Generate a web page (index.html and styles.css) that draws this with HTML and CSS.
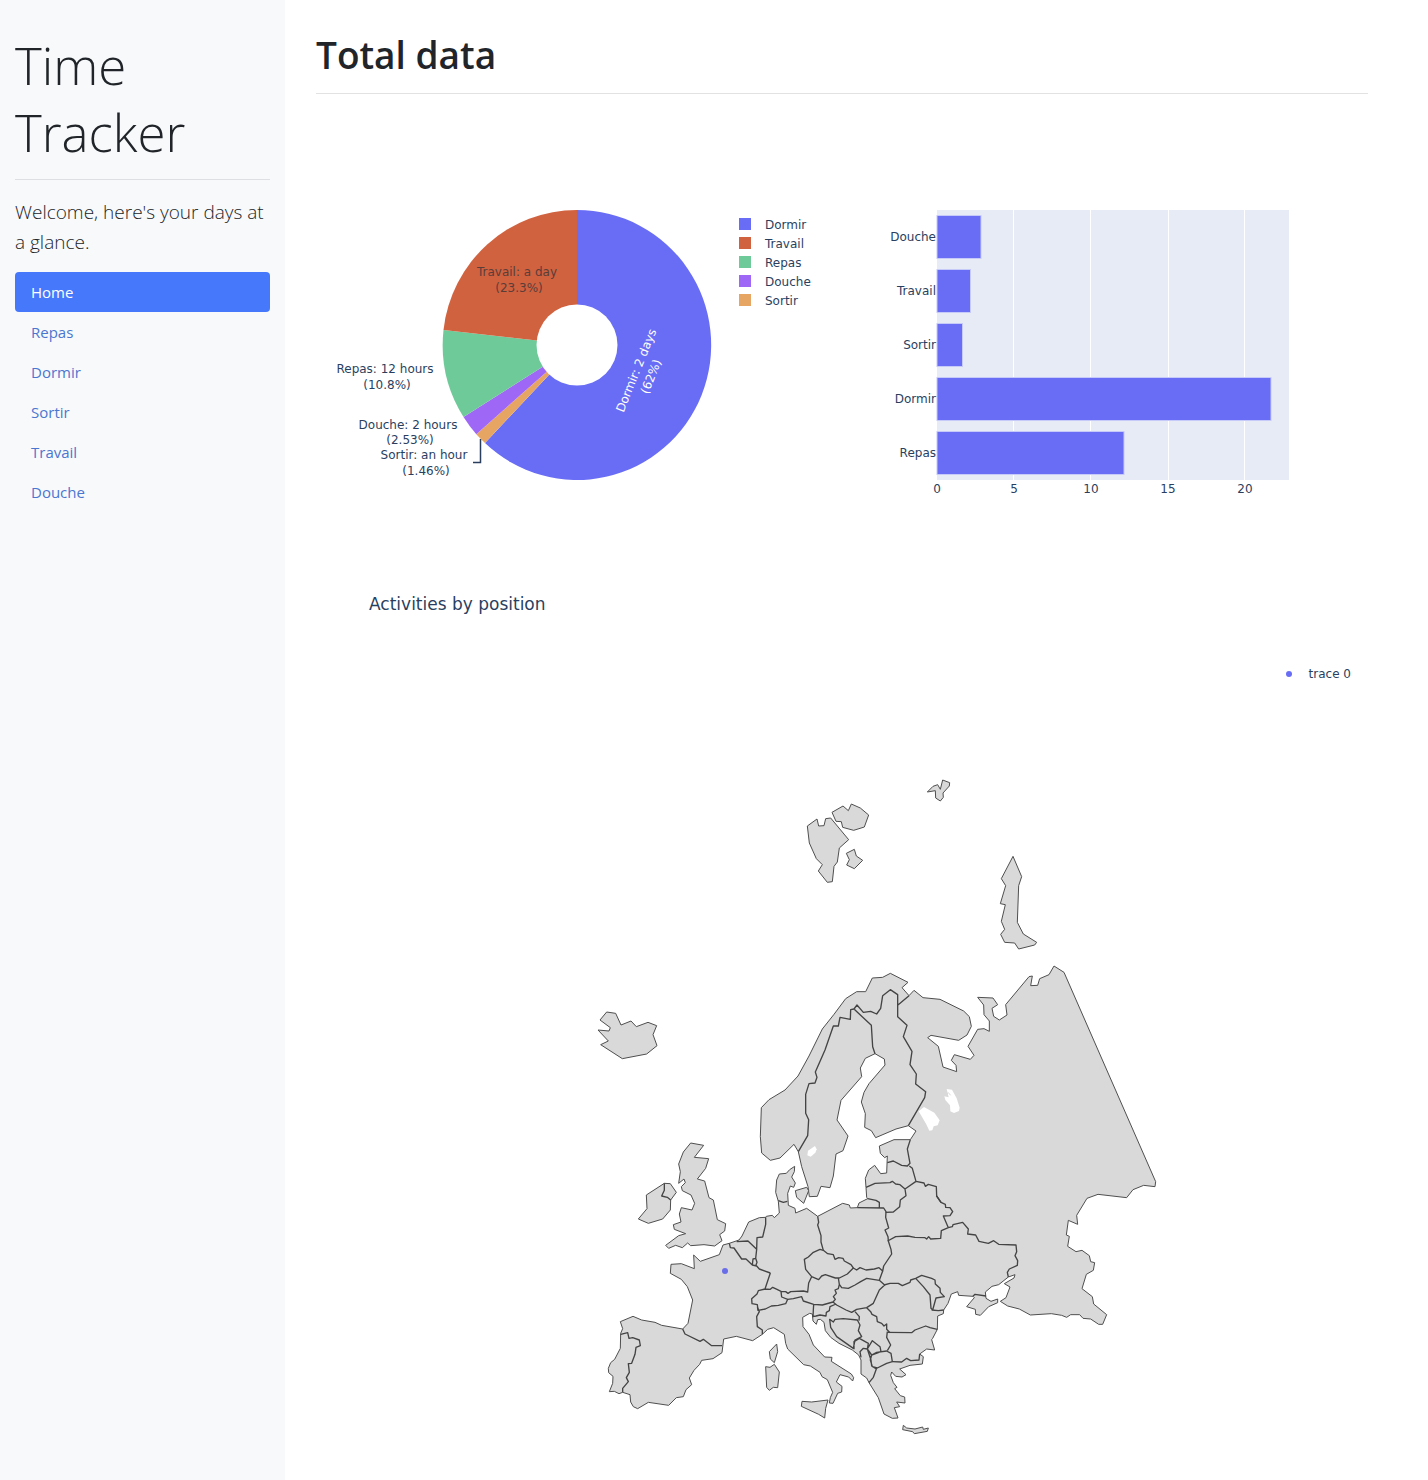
FILE: index.html
```html
<!DOCTYPE html>
<html lang="en">
<head>
<meta charset="utf-8">
<meta name="viewport" content="width=device-width, initial-scale=1">
<title>Time Tracker</title>
<link rel="stylesheet" href="styles.css">
</head>
<body>
<div class="layout">
  <aside class="sidebar">
    <h2 class="brand">Time Tracker</h2>
    <p class="lead">Welcome, here's your days at a glance.</p>
    <nav class="nav">
      <a class="nav-link active" href="#home" aria-current="page">Home</a>
      <a class="nav-link" href="#repas">Repas</a>
      <a class="nav-link" href="#dormir">Dormir</a>
      <a class="nav-link" href="#sortir">Sortir</a>
      <a class="nav-link" href="#travail">Travail</a>
      <a class="nav-link" href="#douche">Douche</a>
    </nav>
  </aside>
  <main class="content">
    <h1 class="page-title">Total data</h1>
    <div class="charts">
      <svg class="chart" viewBox="316 110 526 450" role="img" aria-label="Share of time by activity">
        <path class="dormir" d="M577 345V210A134 135 0 1 1 485 443Z"/>
        <path class="sortir" d="M577 345L485 443A134 135 0 0 1 476.300 434.200Z"/>
        <path class="douche" d="M577 345L476.300 434.200A134 135 0 0 1 463.500 417Z"/>
        <path class="repas" d="M577 345L463.500 417A134 135 0 0 1 443.500 330Z"/>
        <path class="travail" d="M577 345L443.500 330A134 135 0 0 1 577 210Z"/>
        <circle class="hole" cx="577" cy="345" r="40.500"/>
        <path class="leader" d="M473 462.500H480.500V439"/>
        <g class="label middle">
          <text class="on-slice" x="517" y="276">Travail: a day</text>
          <text class="on-slice" x="519" y="292">(23.3%)</text>
          <text x="385" y="373">Repas: 12 hours</text>
          <text x="387" y="389">(10.8%)</text>
          <text x="408" y="429">Douche: 2 hours</text>
          <text x="410" y="444">(2.53%)</text>
          <text x="424" y="459">Sortir: an hour</text>
          <text x="426" y="475">(1.46%)</text>
          <g class="inverse" transform="translate(640 372) rotate(-68)">
            <text x="0" y="0">Dormir: 2 days</text>
            <text x="0" y="16">(62%)</text>
          </g>
        </g>
        <rect class="dormir" x="739" y="218" width="12" height="12"/>
        <rect class="travail" x="739" y="237" width="12" height="12"/>
        <rect class="repas" x="739" y="256" width="12" height="12"/>
        <rect class="douche" x="739" y="275" width="12" height="12"/>
        <rect class="sortir" x="739" y="294" width="12" height="12"/>
        <g class="label">
          <text x="765" y="229">Dormir</text>
          <text x="765" y="248">Travail</text>
          <text x="765" y="267">Repas</text>
          <text x="765" y="286">Douche</text>
          <text x="765" y="305">Sortir</text>
        </g>
      </svg>
      <svg class="chart" viewBox="842 110 526 450" role="img" aria-label="Hours by activity">
        <rect class="plot" x="937" y="210" width="352" height="270"/>
        <path class="gridline" d="M1013.500 210V480M1090.500 210V480M1168.500 210V480M1244.500 210V480"/>
        <g class="bars">
          <rect x="937" y="215.500" width="44" height="43"/>
          <rect x="937" y="269.500" width="33.500" height="43"/>
          <rect x="937" y="323.500" width="25.500" height="43"/>
          <rect x="937" y="377.500" width="334" height="43"/>
          <rect x="937" y="431.500" width="187" height="43"/>
        </g>
        <g class="label end">
          <text x="936" y="241">Douche</text>
          <text x="936" y="295">Travail</text>
          <text x="936" y="349">Sortir</text>
          <text x="936" y="403">Dormir</text>
          <text x="936" y="457">Repas</text>
        </g>
        <g class="label middle">
          <text x="937" y="493">0</text>
          <text x="1014" y="493">5</text>
          <text x="1091" y="493">10</text>
          <text x="1168" y="493">15</text>
          <text x="1245" y="493">20</text>
        </g>
      </svg>
    </div>
    <section class="positions">
      <h2 class="map-title">Activities by position</h2>
      <div class="legend"><span class="dot"></span>trace 0</div>
      <svg class="map" viewBox="948 2052 3156 2388" role="img" aria-label="Map of Europe">
        <!-- continental coastline -->
        <path class="land" d="M2395 3455L2382 3433 2340 3474 2311 3481 2285 3459 2281 3410 2284 3323 2307 3299 2355 3270 2394 3228 2427 3168 2467 3087 2502 3043 2537 2996 2570 2975 2597 2975 2617 2934 2648 2932 2671 2920 2724 2947 2706 2963 2727 2987
        2742 2971 2769 2993 2820 2998 2891 3033 2908 3050 2914 3079 2901 3105 2876 3121 2793 3106 2783 3113 2815 3139 2829 3201 2870 3215 2868 3196 2854 3181 2863 3164 2911 3178 2922 3166 2904 3139 2933 3088 2952 3086 2968 3094 2968 3063 2952 3044 2951 3015 2933 2992 2979 2994 2993 3014 2976 3025 2981 3049 2998 3060 3021 3045 3017 3014 3087 2930 3097 2928 3092 2957 3113 2956 3119 2936 3147 2924 3162 2898 3192 2917
        3467 3545 3465 3560 3431 3556 3399 3569 3380 3593 3294 3583 3261 3595 3230 3646 3233 3673 3205 3661 3199 3705 3208 3709 3203 3739 3228 3755 3246 3751 3268 3767 3272 3785 3284 3788 3280 3811 3259 3823 3246 3866 3277 3890 3281 3912 3320 3944 3308 3973 3296 3973 3272 3957 3249 3955 3239 3944 3212 3944 3200 3952 3185 3946 3154 3941 3091 3945 3058 3927 3023 3918 3001 3904 3018 3893 3030 3861 3013 3851 3042 3834 3045 3824 3025 3831
        2996 3854 2976 3859 2956 3876 2958 3895 2973 3904 2993 3897 2993 3908 2966 3920 2941 3946 2927 3943 2926 3928 2900 3920 2923 3893 2919 3889 2876 3886 2873 3875 2854 3882 2844 3910 2831 3930 2830 3941 2813 3948 2812 3988 2798 4015 2795 4019 2804 4050 2780 4047 2759 4062 2770 4070 2767 4092 2730 4096 2699 4107 2718 4124 2706 4131 2687 4129 2675 4116 2672 4126 2680 4148 2691 4162 2684 4166 2701 4187 2714 4191 2715 4209 2690 4206 2699 4220 2683 4223 2694 4254 2677 4255 2652 4242 2635 4193 2607 4148 2600 4134 2583 4122 2583 4080 2576 4065
        2557 4050 2517 4030 2492 4012 2476 3992 2472 3967 2461 3958 2453 3959 2449 3973 2439 3963 2437 3942 2429 3940 2408 3952 2409 3980 2427 4003 2440 4035 2474 4071 2496 4072 2494 4084 2554 4122 2561 4133 2558 4143 2546 4131 2520 4124 2509 4146 2526 4159 2525 4176 2513 4180 2499 4210 2488 4209 2491 4193 2498 4177 2482 4139 2466 4130 2460 4117 2431 4098 2411 4094 2363 4047 2357 4030 2353 4003 2321 3983 2303 3988 2287 4003 2258 4022
        2209 4009 2171 4017 2166 4058 2139 4076 2105 4081 2099 4093 2082 4111 2068 4134 2075 4154 2058 4169 2050 4190 2029 4193 2006 4216 1945 4207 1913 4226 1900 4220 1892 4206 1890 4184 1868 4177 1857 4181 1843 4174 1828 4175 1838 4150 1839 4129 1826 4118 1825 4105 1832 4088 1844 4078 1861 4045 1862 4000 1868 3986 1861 3965 1899 3949 1925 3960 1965 3967 1985 3976 2048 3987 2064 3970 2078 3900 2062 3860 2044 3838 2011 3820 2013 3793 2044 3791 2083 3806 2081 3765 2101 3784 2158 3764 2169 3735 2188 3730
        2217 3720 2226 3708 2246 3666 2278 3653 2297 3652 2299 3649 2317 3646 2323 3653 2338 3639 2335 3604 2327 3577 2330 3540 2338 3522 2359 3520 2369 3509 2384 3499 2383 3515 2375 3531 2386 3549 2381 3562 2371 3558 2363 3580 2365 3616 2385 3625 2387 3639 2420 3625 2453 3649 2528 3610 2548 3615 2551 3624 2572 3623 2577 3609 2603 3596 2600 3592 2598 3562 2596 3535 2606 3510 2624 3496 2642 3521 2660 3519 2662 3468 2654 3473 2641 3460 2638 3438 2682 3419 2731 3419 2748 3393 2725 3377 2688 3387 2627 3413 2614 3392 2594 3382 2596 3341 2584 3306 2592 3277 2607 3251 2655 3195 2653 3177 2625 3161 2596 3175 2581 3204 2585 3230
        2523 3301 2511 3360 2544 3408 2529 3452 2508 3462 2500 3528 2490 3563 2463 3559 2452 3589 2428 3590 2424 3560 2405 3500Z"/>
        <!-- Svalbard, Franz Josef Land, Novaya Zemlya -->
        <g class="land" transform="translate(2220 2310)">
          <path d="M202 168L231 147 236 168 252 167 257 146 272 144 326 209 298 234 292 276 282 289 277 335 262 337 235 303 247 284 229 266 208 219Z"/>
          <path d="M276 127L309 108 325 122 334 102 361 114 386 135 373 171 341 181 308 172 304 155 288 154Z"/>
          <path d="M319 250L343 238 349 258 368 271 343 296 320 285 328 269Z"/>
          <path d="M562 66L579 49 593 44 601 58 608 30 629 38 628 48 609 69 610 82 601 93 587 84 586 62Z"/>
          <path d="M819 259L845 320 836 347 832 457 850 492 890 517 884 525 836 537 824 519 794 517 782 493 794 478 784 454 796 404 781 401 797 347 784 326Z"/>
        </g>
        <!-- Iceland and Zealand -->
        <g class="land" transform="translate(1740 2880)">
          <path d="M80 156L107 160 123 195 153 183 169 200 204 187 230 197 219 224 231 257 200 282 127 296 62 254 85 243 54 210 87 213 91 203 60 180Z"/>
          <path d="M646 692L680 682 686 692 671 730 650 712Z"/>
        </g>
        <!-- Great Britain and Ireland -->
        <g class="land" transform="translate(1770 3390)">
          <path d="M302 39L341 46 313 82 356 86 347 115 322 147 344 153 357 203 370 210 382 269 407 281 404 303 389 314 396 332 374 348 342 344 302 347 293 339 277 353 257 346 236 355 227 346 266 317 287 311 253 298 250 284 273 276 268 252 274 233 306 240 314 220 303 195 277 182 274 170 286 158 282 147 266 160 271 125 266 102 280 66Z"/>
          <path d="M223 160L241 161 259 187 242 210 241 240 218 267 175 280 145 267 171 236 169 195Z"/>
        </g>
        <!-- Mediterranean islands -->
        <g class="land" transform="translate(2220 3900)">
          <path d="M110 132L113 155 103 188 91 177 88 155Z"/>
          <path d="M77 200L90 202 103 193 118 216 113 263 100 262 88 271 80 262Z"/>
          <path d="M186 304L215 306 264 300 257 325 254 354 236 343 184 319Z"/>
          <path d="M490 376L500 384 525 387 548 381 550 388 565 384 562 394 523 401 518 395 488 389Z"/>
        </g>
        <!-- borders: Norway, Sweden, Denmark -->
        <g class="border" transform="translate(1740 2880)">
          <path d="M655 575L683 527 686 479 677 460 677 403 687 371 705 369 711 352 706 336 735 270 760 198 775 198 780 172 811 178 812 149 822 147M595 722L610 727 622 724"/>
        </g>
        <!-- borders: Finland, Baltic states, Belarus -->
        <g class="border" transform="translate(2550 2850)">
          <path d="M12 177L21 165 40 187 62 184 80 192 92 175 98 137 121 119 143 134 143 166 177 137M12 177L64 226 68 290 75 311M143 166L143 200 171 226 160 260 186 304 180 344 199 372 197 402 227 425 224 443 175 527"/>
          <path d="M181 569L172 597 180 640 172 648 155 646 130 633 112 638M178 648L187 655 198 694 165 717 150 704 137 702 127 694 120 698 75 700 48 712M165 717L168 737 151 750 149 770 130 786 107 787M198 694L222 699 226 709 235 703 259 710 260 738 273 757"/>
        </g>
        <!-- borders: Benelux, Northern Ireland -->
        <g class="border" transform="translate(1770 3390)">
          <path d="M223 160L223 181 215 198 232 202 242 210M418 340L421 353 432 354 455 387 468 387 487 405 500 408 508 417 541 429M440 335L474 333 500 358M487 405L489 387 497 385 501 397 497 408M527 262L527 283 518 321 501 323 500 358 497 385"/>
        </g>
        <!-- borders: Iberia -->
        <g class="border" transform="translate(1770 3720)">
          <path d="M278 267L285 282 330 304 340 298 365 317 396 317M92 283L113 278 117 295 128 293 148 300 151 317 138 322 135 343 125 370 115 371 118 397 109 413 115 425 98 445 98 457"/>
        </g>
        <!-- borders: central Europe -->
        <g class="border" transform="translate(2220 3570)">
          <path d="M91 249L75 297 55 302 51 312 35 326 36 341 52 344 54 361 76 357 94 348 115 346 137 341 143 328 125 321 123 304 111 298 98 292 91 298 75 297M123 304L137 305 144 310 152 305 190 303 203 306 206 279 215 260"/>
          <path d="M193 208L205 201 220 187 240 178 250 181 263 191 280 194 285 208 296 203 309 205 313 213 333 224 340 234 322 252 298 264 286 264 256 254 245 258 236 269 215 260 197 238Z"/>
          <path d="M233 79L236 97 233 105 243 137 243 156 250 181M340 234L350 240 360 233 378 240 403 237 417 233 428 243 431 228 455 192 453 178 445 153 444 140 435 120 446 114 437 82 438 65 431 54 352 53M383 26L408 31 418 37 418 54"/>
          <path d="M143 328L160 326 185 320 190 333 221 343 247 345 279 336 286 328 280 320 289 310 285 300 295 296 298 283 295 264M298 283L305 293 325 295 345 285 362 275 380 265 418 271 428 243M418 271L434 285 418 300 400 340 380 353 350 358 335 367 318 360 290 345 279 336M221 343L220 360 219 380 228 378 240 375 258 378 259 367 268 362 270 350 288 342M380 353L392 365 396 373 410 380 412 395 425 400 432 408 440 402 440 418 450 428"/>
        </g>
        <!-- borders: Ukraine, Moldova, Romania -->
        <g class="border" transform="translate(2640 3570)">
          <path d="M23 153L47 140 83 138 105 142 135 143 140 147 146 140 152 147 182 145 184 122 205 113 217 110 219 104 248 97 265 117 263 132 287 135 297 154 325 160 341 152 356 163 408 165 410 185 405 197 413 212 412 226 388 237 382 247 385 261M169 17L183 37 196 43 197 52 210 53 218 65 210 77 190 78 205 113"/>
          <path d="M12 285L30 280 55 280 67 287 90 277 92 270 107 265 125 256 155 265 165 270 166 282 180 295 181 307 193 320 168 324 158 360 153 355 150 315 130 290 107 265M155 360L175 362 191 360M279 319L285 313 318 318M22 427L95 428 105 420 137 408 150 413 172 418"/>
        </g>
        <!-- borders: Balkans and the Alps -->
        <g class="border" transform="translate(2220 3900)">
          <path d="M52 22L58 35 50 50 52 80 67 90 67 103M345 35L358 50 357 62M442 95L440 112 452 135 442 152M457 185L485 186 500 175 512 182 537 180 539 162"/>
          <path d="M395 165L410 157 440 153 453 160 457 185 440 190 412 204 397 200 391 180ZM382 147L397 122 420 140 423 155 395 165ZM363 172L360 155 370 145 382 147 393 180 395 198 409 207 400 232 387 248M342 148L342 125 358 115 385 130 382 147M269 58L280 66 285 58 310 56 352 60 360 75 355 92 365 110 345 120 340 145 290 110 272 82Z"/>
        </g>
        <!-- lakes -->
        <g class="lake">
          <path d="M2756 3334L2772 3321 2803 3338 2819 3361 2813 3376 2801 3379 2797 3391 2788 3392 2778 3371Z"/>
          <path d="M2840 3267L2856 3269 2870 3295 2879 3323 2877 3333 2862 3339 2851 3334 2850 3316 2836 3300 2833 3289 2846 3292Z"/>
          <path d="M2422 3466L2424 3452 2445 3438 2450 3448 2446 3458 2432 3470Z"/>
          <path class="shore" d="M2835 3287L2845 3278 2852 3286"/>
        </g>
        <circle class="position" cx="2175" cy="3813" r="9"/>
      </svg>
    </section>
  </main>
</div>
</body>
</html>
```
FILE: styles.css
```css
* { box-sizing: border-box; }

body {
  margin: 0;
  background: #fff;
  color: #212529;
  font-family: "Open Sans", "Noto Sans", sans-serif;
  font-size: 15px;
  line-height: 24px;
}

.layout {
  display: grid;
  grid-template-columns: 285px minmax(0, 1fr);
  min-height: 100vh;
}

.sidebar {
  padding: 32px 15px;
  background: #f8f9fb;
}

.brand {
  margin: 0;
  padding-bottom: 13px;
  border-bottom: 1px solid #dddfe2;
  font-size: 51px;
  font-weight: 300;
  line-height: 67px;
}

.lead {
  margin: 17px 0 15px;
  font-size: 19px;
  font-weight: 300;
  line-height: 30px;
}

.nav {
  display: flex;
  flex-direction: column;
}

.nav-link {
  padding: 8px 16px;
  border-radius: 4px;
  color: #4a76d0;
  text-decoration: none;
}

.nav-link.active {
  background: #4678fc;
  color: #fff;
}

.content { padding: 32px 60px 0 31px; }

.page-title {
  margin: 0;
  padding-bottom: 16px;
  border-bottom: 1px solid #e2e2e3;
  font-size: 37px;
  font-weight: 600;
  line-height: 45px;
}

.charts {
  display: grid;
  grid-template-columns: 1fr 1fr;
  margin-top: 16px;
}

.chart, .map {
  display: block;
  width: 100%;
}

.label, .legend {
  fill: #2a3f5f;
  color: #2a3f5f;
  font-family: "DejaVu Sans", sans-serif;
  font-size: 12px;
}

.middle { text-anchor: middle; }
.end { text-anchor: end; }
.on-slice { fill: #5b3d38; }
.inverse { fill: #fff; }

.dormir { fill: #696df5; }
.travail { fill: #d06240; }
.repas { fill: #6fca99; }
.douche { fill: #9f67f5; }
.sortir { fill: #e7a564; }
.hole { fill: #fff; }
.leader { fill: none; stroke: #2a3f5f; stroke-width: 1.5; }

.plot { fill: #e7ebf6; }
.gridline { stroke: #fff; }
.bars { fill: #696df5; stroke: #c5caf8; }

.positions { padding-top: 32px; }

.map-title {
  margin: 0 53px;
  color: #2a3f5f;
  font-family: "DejaVu Sans", sans-serif;
  font-size: 17px;
  font-weight: 400;
  line-height: 24px;
}

.legend {
  display: flex;
  align-items: center;
  justify-content: flex-end;
  gap: 17px;
  margin-top: 48px;
  padding-right: 17px;
  line-height: 20px;
}

.dot {
  width: 6px;
  height: 6px;
  border-radius: 50%;
  background: #696df5;
}

.land {
  fill: #d9d9d9;
  stroke: #4f4f4f;
  stroke-width: 3;
  stroke-linejoin: round;
}

.border {
  fill: none;
  stroke: #444;
  stroke-width: 4;
  stroke-linejoin: round;
}

.lake { fill: #fff; }
.shore { fill: none; stroke: #d9d9d9; stroke-width: 3; }
.position { fill: #696de8; }
```
